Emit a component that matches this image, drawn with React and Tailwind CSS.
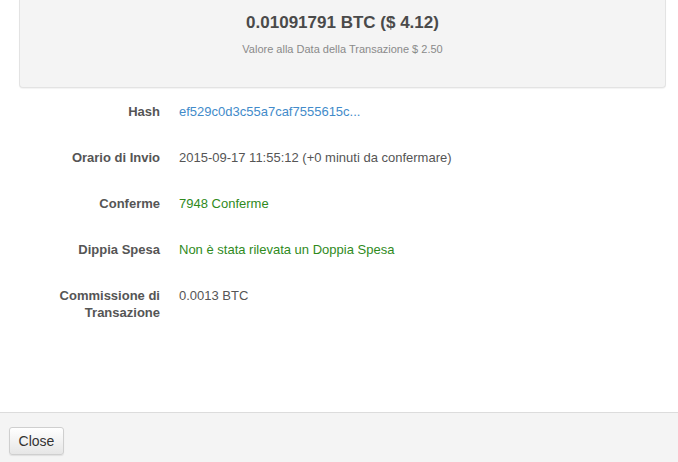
import React from 'react'

const rows = [
  { label: 'Hash', value: 'ef529c0d3c55a7caf7555615c...', tone: 'text-[#428bca]' },
  { label: 'Orario di Invio', value: '2015-09-17 11:55:12 (+0 minuti da confermare)', tone: 'text-[#555]' },
  { label: 'Conferme', value: '7948 Conferme', tone: 'text-[#2f8a1c]' },
  { label: 'Dippia Spesa', value: 'Non è stata rilevata un Doppia Spesa', tone: 'text-[#2f8a1c]' },
  { label: 'Commissione di Transazione', value: '0.0013 BTC', tone: 'text-[#555]' },
]

const App = () => {
  return (
    <div className="h-[462px] w-[678px] flex flex-col bg-white font-['Liberation_Sans',Arial,sans-serif] text-[13px] leading-[18px] text-[#555] overflow-hidden">
      <div className="flex-1">
        {/* summary well */}
        <div className="ml-[19px] mr-[12px] h-[88px] bg-[#f4f4f4] border border-t-0 border-[#e3e3e3] rounded-b-[4px] shadow-[0_1px_1px_rgba(0,0,0,0.05)] flex flex-col items-center pt-[12px]">
          <h2 className="text-[17px] leading-[22px] font-bold text-[#4a4a4a]">0.01091791 BTC ($ 4.12)</h2>
          <p className="mt-[8px] text-[11px] leading-[14px] text-[#8a8a8a]">Valore alla Data della Transazione $ 2.50</p>
        </div>

        <dl className="mt-[15px] flex flex-col gap-[29px]">
          {rows.map((row) => (
            <div key={row.label} className="flex">
              <dt className="w-[160px] shrink-0 text-right font-bold text-[#555] leading-[17px] pl-[40px]">{row.label}</dt>
              <dd className={`ml-[19px] leading-[17px] ${row.tone}`}>{row.value}</dd>
            </div>
          ))}
        </dl>
      </div>

      {/* footer */}
      <div className="h-[50px] border-t border-[#dcdcdc] bg-[#f4f4f4] flex items-start pt-[14px] px-[9px]">
        <button className="h-[28px] w-[55px] rounded-[3px] border border-[#cfcfcf] bg-gradient-to-b from-white to-[#e6e6e6] shadow-[0_1px_1px_rgba(0,0,0,0.08)] text-[14px] leading-[20px] text-[#333] font-['Liberation_Sans',Arial,sans-serif]">
          Close
        </button>
      </div>
    </div>
  )
}

export default App
